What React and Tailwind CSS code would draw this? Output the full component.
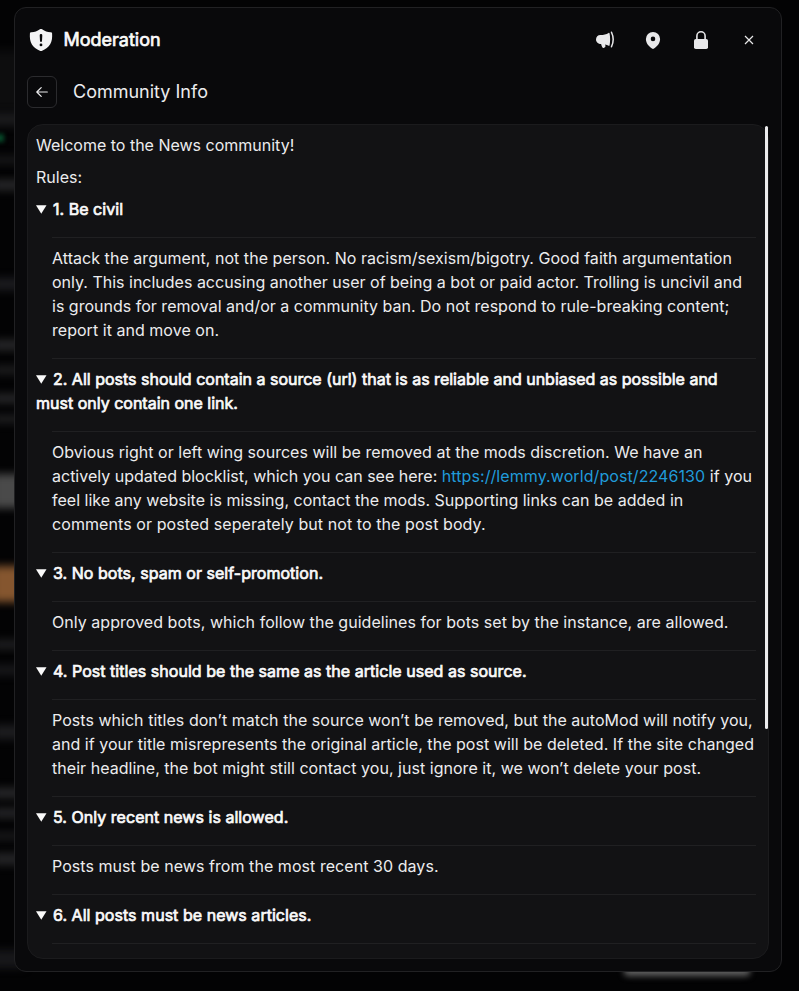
import React from "react";

function ShieldIcon() {
  return (
    <svg viewBox="0 0 24 24" className="size-6 text-[#f4f4f5]" fill="currentColor" aria-hidden="true">
      <path fillRule="evenodd" d="M12 .9c.4 0 .8.1 1.1.4 2.7 1.9 5.3 2.8 8.4 2.9 1 0 1.5.5 1.6 1.4.6 8.600-2.200 14.100-10.400 17.300-.5.200-.9.200-1.400 0C3.100 19.700.3 14.200.9 5.600c.1-.9.6-1.400 1.600-1.400 3.100-.1 5.700-1 8.400-2.900.3-.3.700-.4 1.100-.4ZM12 6a1.300 1.300 0 0 0-1.300 1.400l.3 5.700c.1 1.200 1.900 1.200 2 0l.3-5.700A1.300 1.300 0 0 0 12 6Zm0 9.500a1.400 1.400 0 1 0 0 2.800 1.400 1.400 0 0 0 0-2.800Z" />
    </svg>
  );
}

function MegaphoneIcon() {
  return (
    <svg viewBox="0 0 20 20" className="size-5" fill="currentColor" aria-hidden="true">
      <path d="M13.600 2.900c.5-.2.900 0 1 .5.700 3.900.7 7.900 0 11.800-.1.500-.5.700-1 .5-1-.5-2.200-.9-3.500-1.200l.3.900c.2.600 0 1.500-.5 1.800l-.8.500c-.7.400-1.400.2-1.800-.5-.5-.9-.9-1.800-1.200-3.100C3.200 14.100 1 12.200 1 9.600 1 6.700 2.800 5.100 5.400 5c3.300-.2 5.700-.6 8.200-2.100Z" />
      <path fill="none" stroke="currentColor" strokeWidth="1.500" strokeLinecap="round" d="M16.500 2.300c2.100 4.500 2.100 10 0 14.500" />
    </svg>
  );
}

function PinIcon() {
  return (
    <svg viewBox="0 0 20 20" className="size-5" fill="currentColor" aria-hidden="true">
      <path fillRule="evenodd" d="M10 1.900a7.100 7.100 0 0 0-7.100 7.100c0 4.500 3.200 7.500 6.100 9.600.6.500 1.400.5 2 0 2.900-2.100 6.100-5.100 6.100-9.600A7.100 7.100 0 0 0 10 1.900Zm0 4.700a2.300 2.300 0 1 0 0 4.600 2.300 2.300 0 0 0 0-4.600Z" />
    </svg>
  );
}

function LockIcon() {
  return (
    <svg viewBox="0 0 20 20" className="size-5" aria-hidden="true">
      <rect x="3" y="9" width="14" height="10" rx="1.800" fill="currentColor" />
      <path fill="none" stroke="currentColor" strokeWidth="1.600" d="M5.900 10V5.900a4.100 4.100 0 0 1 8.200 0V10" />
    </svg>
  );
}

function CloseIcon() {
  return (
    <svg viewBox="0 0 10 10" className="size-2.5" fill="none" stroke="currentColor" strokeWidth="1.200" aria-hidden="true">
      <path d="m1 1 8 8M9 1 1 9" />
    </svg>
  );
}

function BackIcon() {
  return (
    <svg viewBox="0 0 12 12" className="size-3" fill="none" stroke="currentColor" strokeWidth="1.200" strokeLinecap="round" strokeLinejoin="round" aria-hidden="true">
      <path d="M11.300 6H.8M5.200 1.600.8 6l4.400 4.400" />
    </svg>
  );
}

function Rule({ title, children }) {
  return (
    <section>
      <h3 className="text-[#fafafa] [-webkit-text-stroke:0.7px_currentColor]">
        <svg viewBox="0 0 11 9" className="mr-[6.5px] inline-block h-[9px] w-[10.5px] align-[1px]" fill="currentColor" stroke="none" aria-hidden="true">
          <path d="M0 0h11L5.500 9Z" />
        </svg>
        {title}
      </h3>
      <div className="mt-4 mr-1 mb-2 ml-4 border-y border-[#202022] pt-2 pb-4">
        <p>{children}</p>
      </div>
    </section>
  );
}

const streaks = [
  { y: 50, h: 60, c: "#0d0d0e" }, { y: 112, h: 14, c: "#1a1a1c" }, { y: 156, h: 8, c: "#18181a" },
  { y: 180, h: 10, c: "#29292b" }, { y: 278, h: 12, c: "#1c1c20" }, { y: 340, h: 10, c: "#29292b" },
  { y: 366, h: 8, c: "#1f1f21" }, { y: 394, h: 9, c: "#28282a" }, { y: 415, h: 8, c: "#202022" },
  { y: 474, h: 34, c: "#4a4a4a" }, { y: 566, h: 36, c: "#85562f" },
  { y: 640, h: 9, c: "#202022" }, { y: 665, h: 10, c: "#19191b" }, { y: 725, h: 14, c: "#1d1d20" },
  { y: 788, h: 10, c: "#29292b" }, { y: 808, h: 10, c: "#252527" }, { y: 832, h: 8, c: "#19191b" },
  { y: 853, h: 12, c: "#252527" }, { y: 950, h: 18, c: "#17171a" },
];

function Backdrop() {
  return (
    <div className="absolute inset-0 overflow-hidden bg-[#030304]" aria-hidden="true">
      {streaks.map((s) => (
        <div key={s.y} className="absolute -left-2 w-8 blur-[4px]" style={{ top: s.y, height: s.h, background: s.c }} />
      ))}
      <div className="absolute top-[134px] -left-2 h-2 w-3 bg-[#064a29] blur-[2px]" />
      <div className="absolute top-[958px] left-[624px] h-[18px] w-[126px] rounded bg-[#606060] blur-[3px]" />
    </div>
  );
}

export default function App() {
  return (
    <div className="relative h-[991px] w-[799px] overflow-hidden bg-black pt-[7px] pl-[14px] font-['Inter',sans-serif] text-[#ececee]">
      <Backdrop />
      <main className="relative flex h-[965px] w-[768px] flex-col rounded-xl border border-[#212123] bg-[#09090b] px-3">
        <header className="flex h-16 items-center pl-0.5">
          <ShieldIcon />
          <h1 className="ml-[10.5px] text-lg text-[#fafafa] [-webkit-text-stroke:0.7px_currentColor]">Moderation</h1>
          <div className="mr-2.5 ml-auto flex items-center gap-7 text-[#e8e8ea]">
            <MegaphoneIcon />
            <PinIcon />
            <LockIcon />
            <span className="flex w-5 justify-center"><CloseIcon /></span>
          </div>
        </header>
        <div className="mt-1 flex h-8 items-center">
          <button className="flex h-8 w-[30px] items-center justify-center rounded-md border border-[#2b2b2e]" aria-label="Back">
            <BackIcon />
          </button>
          <h2 className="ml-4 text-lg">Community Info</h2>
        </div>
        <div className="relative mt-4 w-[742px]">
          <div className="h-[835px] overflow-hidden rounded-2xl border border-[#1b1b1d] bg-[#121214] px-2 pt-2 text-base tracking-[0.035px] whitespace-nowrap">
            <p className="tracking-normal">Welcome to the News community!</p>
            <p className="mt-2 mb-2 tracking-normal">Rules:</p>
            <Rule title="1. Be civil">
              <span className="tracking-[0.045px]">Attack the argument, not the person. No racism/sexism/bigotry. Good faith argumentation</span><br />
              <span className="tracking-[0px]">only. This includes accusing another user of being a bot or paid actor. Trolling is uncivil and</span><br />
              <span className="tracking-[0.01px]">is grounds for removal and/or a community ban. Do not respond to rule-breaking content;</span><br />
              report it and move on.
            </Rule>
            <Rule title={<><span className="tracking-[0px]">2. All posts should contain a source (url) that is as reliable and unbiased as possible and</span><br /><span className="tracking-[0px]">must only contain one link.</span></>}>
              <span className="tracking-[0.025px]">Obvious right or left wing sources will be removed at the mods discretion. We have an</span><br />
              <span className="tracking-[0px]">actively updated blocklist, which you can see here: </span><a className="tracking-[0.085px] text-[#209bda]">https://lemmy.world/post/2246130</a> if you<br />
              <span className="tracking-[0.01px]">feel like any website is missing, contact the mods. Supporting links can be added in</span><br />
              <span className="tracking-[0.08px]">comments or posted seperately but not to the post body.</span>
            </Rule>
            <Rule title="3. No bots, spam or self-promotion.">
              <span className="tracking-[0.04px]">Only approved bots, which follow the guidelines for bots set by the instance, are allowed.</span>
            </Rule>
            <Rule title="4. Post titles should be the same as the article used as source.">
              Posts which titles don’t match the source won’t be removed, but the autoMod will notify you,<br />
              and if your title misrepresents the original article, the post will be deleted. If the site changed<br />
              their headline, the bot might still contact you, just ignore it, we won’t delete your post.
            </Rule>
            <Rule title="5. Only recent news is allowed."><span className="tracking-[0.055px]">Posts must be news from the most recent 30 days.</span></Rule>
            <Rule title="6. All posts must be news articles." />
          </div>
          <div className="absolute top-0.5 right-px h-[603px] w-[3px] rounded-full bg-[#ececee]" />
        </div>
      </main>
    </div>
  );
}
